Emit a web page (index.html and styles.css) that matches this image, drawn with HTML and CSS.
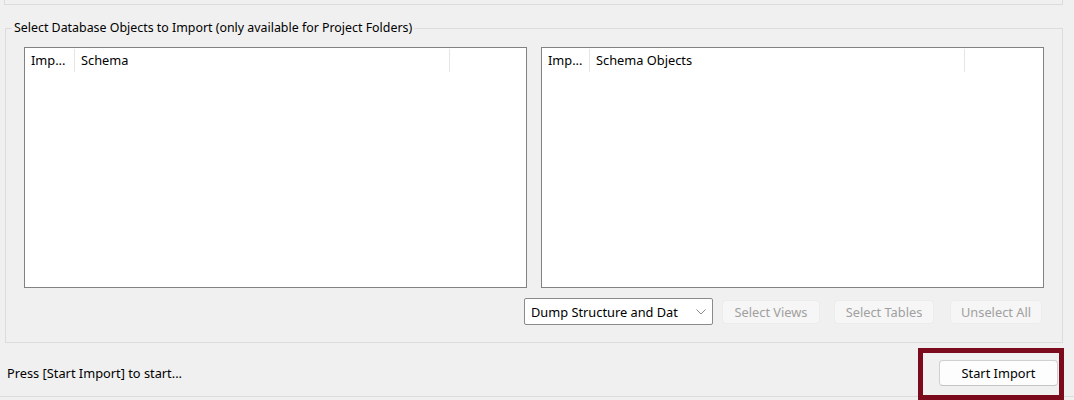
FILE: index.html
```html
<!DOCTYPE html>
<html>
<head>
<meta charset="utf-8">
<link rel="stylesheet" href="styles.css">
</head>
<body>
<div class="topbox"></div>
<div class="group">
  <span class="group-title">Select Database Objects to Import (only available for Project Folders)</span>
  <div class="lists">
    <div class="list">
      <div class="list-head">
        <div class="col col-imp">Imp...</div>
        <div class="col col-name">Schema</div>
        <div class="col col-rest"></div>
      </div>
    </div>
    <div class="list">
      <div class="list-head">
        <div class="col col-imp col-imp-r">Imp...</div>
        <div class="col col-name">Schema Objects</div>
        <div class="col col-rest"></div>
      </div>
    </div>
  </div>
  <div class="controls">
    <div class="combo">
      <span class="combo-text">Dump Structure and Dat</span>
      <svg class="chev" width="10" height="6" viewBox="0 0 10 6"><path d="M0.5 0.5 L5 5 L9.5 0.5" fill="none" stroke="#8a8a8a" stroke-width="1"/></svg>
    </div>
    <button class="btn-dis btn-views">Select Views</button>
    <button class="btn-dis btn-tables">Select Tables</button>
    <button class="btn-dis btn-unsel">Unselect All</button>
  </div>
</div>
<div class="status">
  <span class="status-text">Press [Start Import] to start...</span>
  <div class="start-wrap">
    <button class="btn-start">Start Import</button>
    <div class="highlight"></div>
  </div>
</div>
<div class="bottombar"></div>
</body>
</html>
```
FILE: styles.css
```css
html, body {
  margin: 0;
  padding: 0;
  background: #f0f0f0;
  width: 1074px;
  height: 400px;
  overflow: hidden;
  font-family: "Noto Sans", "Open Sans", sans-serif;
  font-size: 12.8px;
  color: #000;
}
.topbox {
  height: 4px;
  margin: 0 11px 0 4px;
  border: 1px solid #dcdcdc;
  border-top: none;
}
.group {
  position: relative;
  margin: 23px 11px 0 5px;
  border: 1px solid #dcdcdc;
  padding: 18px 18px 0 18px;
  box-sizing: border-box;
  height: 315px;
}
.group-title {
  position: absolute;
  top: -9px;
  left: 6px;
  padding: 0 2px;
  background: #f0f0f0;
  line-height: 16px;
  font-size: 12.4px;
  white-space: nowrap;
}
.lists {
  display: grid;
  grid-template-columns: 503px 503px;
  column-gap: 14px;
}
.list {
  height: 241px;
  box-sizing: border-box;
  background: #fff;
  border: 1px solid #828282;
}
.list-head {
  display: flex;
  height: 23px;
  margin-top: 1px;
}
.col {
  line-height: 23px;
  padding-left: 6px;
  box-sizing: border-box;
  white-space: nowrap;
}
.col-imp {
  width: 50px;
  border-right: 1px solid #e5e5e5;
}
.col-imp-r {
  width: 48px;
}
.col-name {
  width: 375px;
  border-right: 1px solid #e5e5e5;
}
.col-rest {
  flex: 1;
}
.controls {
  display: flex;
  align-items: center;
  justify-content: flex-end;
  margin-top: 10px;
  padding-right: 2px;
}
.combo {
  width: 189px;
  height: 27px;
  box-sizing: border-box;
  background: #fff;
  border: 1px solid #8a8a8a;
  border-radius: 2px;
  display: flex;
  align-items: center;
  justify-content: space-between;
  padding: 0 6px 0 6px;
}
.combo-text {
  white-space: nowrap;
}
.chev {
  display: block;
  flex: none;
}
.btn-dis {
  height: 24px;
  box-sizing: border-box;
  background: #f6f6f6;
  border: 1px solid #ececec;
  border-radius: 4px;
  color: #a0a0a0;
  font-family: inherit;
  font-size: 12.8px;
  padding: 0;
}
.btn-views { width: 98px; margin-left: 9px; }
.btn-tables { width: 100px; margin-left: 14px; }
.btn-unsel { width: 92px; margin-left: 16px; }
.status {
  display: flex;
  align-items: center;
  justify-content: space-between;
  height: 53px;
  padding: 0 16px 0 7px;
}
.status-text {
  margin-top: 7px;
}
.start-wrap {
  position: relative;
  margin-top: 7px;
}
.btn-start {
  display: block;
  width: 119px;
  height: 26px;
  box-sizing: border-box;
  background: #fdfdfd;
  border: 1px solid #d0d0d0;
  border-bottom-color: #c4c4c4;
  border-radius: 4px;
  font-family: inherit;
  font-size: 12.8px;
  color: #000;
  padding: 0;
}
.highlight {
  position: absolute;
  left: -21px;
  top: -12px;
  width: 146px;
  height: 52px;
  box-sizing: border-box;
  border: 5px solid #7b0a1c;
}
.bottombar {
  height: 4px;
  border-top: 1px solid #dcdcdc;
}
```
